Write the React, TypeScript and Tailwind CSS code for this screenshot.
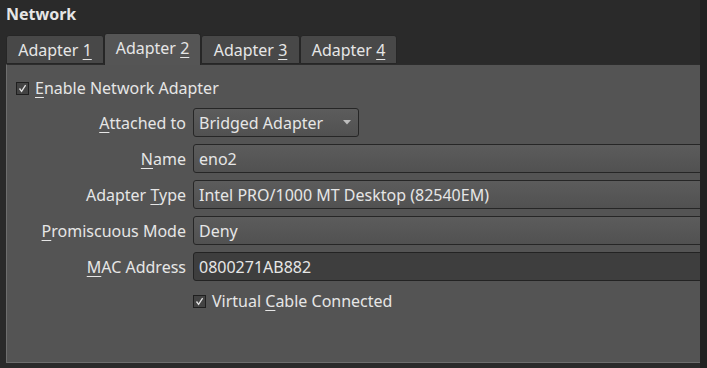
import React from "react";

const font = { fontFamily: '"Noto Sans", "Open Sans", sans-serif' };

function U({ children }: { children: React.ReactNode }) {
  return <span className="underline decoration-1 underline-offset-[3px]">{children}</span>;
}

function Check({ className = "" }: { className?: string }) {
  return (
    <div className={"w-[13px] h-[13px] border border-[#1f1f1f] bg-[#434343] flex items-center justify-center shrink-0 " + className}>
      <svg width="9" height="9" viewBox="0 0 9 9">
        <path d="M1.5 4.5 L3.6 7.3 L7.6 1.2" fill="none" stroke="#e4e4e4" strokeWidth="1.3" />
      </svg>
    </div>
  );
}

function Field({ children, dark = false, w = "w-[600px]" }: { children: React.ReactNode; dark?: boolean; w?: string }) {
  return (
    <div
      className={
        "h-[29px] rounded-[3px] border flex items-center pl-[5px] shrink-0 " +
        w +
        (dark
          ? " bg-[#3e3e3e] border-[#232323]"
          : " bg-gradient-to-b from-[#5c5c5c] to-[#515151] border-[#262626]")
      }
    >
      {children}
    </div>
  );
}

function Row({ label, children }: { label: React.ReactNode; children: React.ReactNode }) {
  return (
    <div className="flex items-center h-[29px]">
      <div className="w-[179px] text-right shrink-0 whitespace-nowrap">{label}</div>
      <div className="ml-[7px] flex">{children}</div>
    </div>
  );
}

function Tab({ children, w, active = false }: { children: React.ReactNode; w: string; active?: boolean }) {
  return (
    <div
      className={
        "flex justify-center rounded-t-[3px] border border-[#262626] shrink-0 pt-[4px] " +
        w +
        (active
          ? " h-[32px] bg-[#555555] border-b-0 z-10 -mb-[1px]"
          : " h-[29px] bg-[#484848]")
      }
    >
      <span className="leading-[20px] whitespace-nowrap">{children}</span>
    </div>
  );
}

export default function App() {
  return (
    <div className="w-[707px] h-[368px] bg-[#2a2a2a] flex text-[16px] text-[#e6e6e6] overflow-hidden" style={font}>
      <div className="w-[700px] h-[368px] overflow-hidden pl-[6px] flex flex-col">
        <div className="pt-[4px] h-[24px] font-bold leading-[20px]">Network</div>
        <div className="mt-[8px] flex items-end h-[32px]">
          <Tab w="w-[98px]">
            Adapter <U>1</U>
          </Tab>
          <Tab w="w-[97px]" active>
            Adapter <U>2</U>
          </Tab>
          <Tab w="w-[99px]">
            Adapter <U>3</U>
          </Tab>
          <Tab w="w-[97px]">
            Adapter <U>4</U>
          </Tab>
        </div>
        <div className="w-[720px] h-[299px] bg-[#545454] border-t border-t-[#2c2c2c] border-l border-b border-l-[#6e6e6e] border-b-[#6e6e6e] flex flex-col">
          <div className="flex items-center h-[20px] mt-[13px] pl-[9px] leading-[20px]">
            <Check />
            <span className="ml-[6px]">
              <U>E</U>nable Network Adapter
            </span>
          </div>
          <div className="mt-[10px] flex flex-col gap-[7px] leading-[20px]">
            <Row
              label={
                <>
                  <U>A</U>ttached to
                </>
              }
            >
              <Field w="w-[166px]">
                <span className="flex-1">Bridged Adapter</span>
                <svg width="8" height="5" viewBox="0 0 8 5" className="mr-[7px]">
                  <path d="M0 0 H8 L4 4.5 Z" fill="#bdbdbd" />
                </svg>
              </Field>
            </Row>
            <Row
              label={
                <>
                  <U>N</U>ame
                </>
              }
            >
              <Field>eno2</Field>
            </Row>
            <Row
              label={
                <>
                  Adapter <U>T</U>ype
                </>
              }
            >
              <Field>Intel PRO/1000 MT Desktop (82540EM)</Field>
            </Row>
            <Row
              label={
                <>
                  <U>P</U>romiscuous Mode
                </>
              }
            >
              <Field>Deny</Field>
            </Row>
            <Row
              label={
                <>
                  <U>M</U>AC Address
                </>
              }
            >
              <Field dark>0800271AB882</Field>
            </Row>
          </div>
          <div className="flex items-center h-[20px] mt-[10px] pl-[186px] leading-[20px]">
            <Check />
            <span className="ml-[6px]">
              Virtual <U>C</U>able Connected
            </span>
          </div>
        </div>
      </div>
      <div className="w-[7px] h-[368px] bg-[#222222]" />
    </div>
  );
}
